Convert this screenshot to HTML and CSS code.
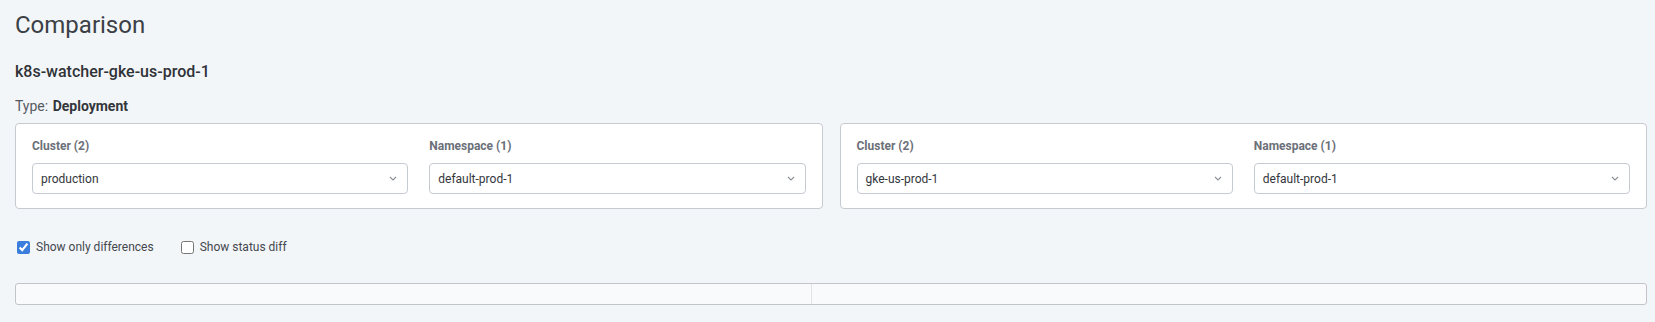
FILE: index.html
```html
<!DOCTYPE html>
<html lang="en">
<head>
    <meta charset="UTF-8">
    <meta name="viewport" content="width=device-width, initial-scale=1.0">
    <title>Comparison</title>
    <link rel="stylesheet" href="styles.css">
</head>
<body>
    <div class="page">
        <h1 class="title">Comparison</h1>
        <h2 class="subtitle">k8s-watcher-gke-us-prod-1</h2>
        <div class="type">Type: <b>Deployment</b></div>

        <div class="panels">
            <div class="panel">
                <div class="field">
                    <div class="field-label">Cluster (2)</div>
                    <div class="select">
                        <span>production</span>
                        <svg class="chevron" width="8" height="5" viewBox="0 0 8 5"><path d="M1 1l3 3 3-3" fill="none" stroke="#8a8f98" stroke-width="1.1"/></svg>
                    </div>
                </div>
                <div class="field">
                    <div class="field-label">Namespace (1)</div>
                    <div class="select">
                        <span>default-prod-1</span>
                        <svg class="chevron" width="8" height="5" viewBox="0 0 8 5"><path d="M1 1l3 3 3-3" fill="none" stroke="#8a8f98" stroke-width="1.1"/></svg>
                    </div>
                </div>
            </div>
            <div class="panel">
                <div class="field">
                    <div class="field-label">Cluster (2)</div>
                    <div class="select">
                        <span>gke-us-prod-1</span>
                        <svg class="chevron" width="8" height="5" viewBox="0 0 8 5"><path d="M1 1l3 3 3-3" fill="none" stroke="#8a8f98" stroke-width="1.1"/></svg>
                    </div>
                </div>
                <div class="field">
                    <div class="field-label">Namespace (1)</div>
                    <div class="select">
                        <span>default-prod-1</span>
                        <svg class="chevron" width="8" height="5" viewBox="0 0 8 5"><path d="M1 1l3 3 3-3" fill="none" stroke="#8a8f98" stroke-width="1.1"/></svg>
                    </div>
                </div>
            </div>
        </div>

        <div class="options">
            <label class="check"><input type="checkbox" checked> Show only differences</label>
            <label class="check"><input type="checkbox"> Show status diff</label>
        </div>

        <div class="diff-table">
            <div class="diff-col"></div>
            <div class="diff-col"></div>
        </div>
    </div>
</body>
</html>
```

FILE: styles.css
```css
body {
    margin: 0;
    background-color: #f3f6f9;
    font-family: Roboto, 'Liberation Sans', sans-serif;
    color: #3b3f46;
}

.page {
    padding: 11px 8px 0 15px;
}

.title {
    font-size: 24px;
    font-weight: 400;
    line-height: 28px;
    margin: 0;
    color: #3b3f46;
}

.subtitle {
    font-size: 16px;
    font-weight: 500;
    line-height: 20px;
    margin: 23px 0 0;
    color: #2f3237;
}

.type {
    font-size: 14px;
    line-height: 17px;
    margin-top: 16px;
    color: #555a62;
}

.type b {
    font-weight: 700;
    color: #33363b;
    margin-left: 1px;
}

.panels {
    display: grid;
    grid-template-columns: 1fr 1fr;
    gap: 17px;
    margin-top: 8px;
}

.panel {
    background: #ffffff;
    border: 1px solid #c6cad1;
    border-radius: 4px;
    padding: 14px 16px;
    display: grid;
    grid-template-columns: 1fr 1fr;
    gap: 21px;
}

.field-label {
    font-size: 12px;
    font-weight: 700;
    line-height: 16px;
    color: #6b7079;
    margin-bottom: 9px;
}

.select {
    height: 31px;
    box-sizing: border-box;
    border: 1px solid #c6cad1;
    border-radius: 4px;
    display: flex;
    align-items: center;
    justify-content: space-between;
    padding: 0 10px 0 8px;
    font-size: 12px;
    color: #33363b;
}

.chevron {
    display: block;
}

.options {
    display: flex;
    gap: 27px;
    margin-top: 30px;
    padding-left: 2px;
}

.check {
    display: flex;
    align-items: center;
    gap: 6px;
    font-size: 12px;
    line-height: 16px;
    color: #44484f;
}

.check input {
    margin: 0;
    width: 13px;
    height: 13px;
    accent-color: #3b7ddd;
}

.diff-table {
    margin-top: 28px;
    height: 22px;
    box-sizing: border-box;
    border: 1px solid #c2c4c9;
    border-radius: 3px;
    background: #f8fafc;
    display: grid;
    grid-template-columns: 796fr 836fr;
}

.diff-col + .diff-col {
    border-left: 1px solid #e1e4e8;
}
```
